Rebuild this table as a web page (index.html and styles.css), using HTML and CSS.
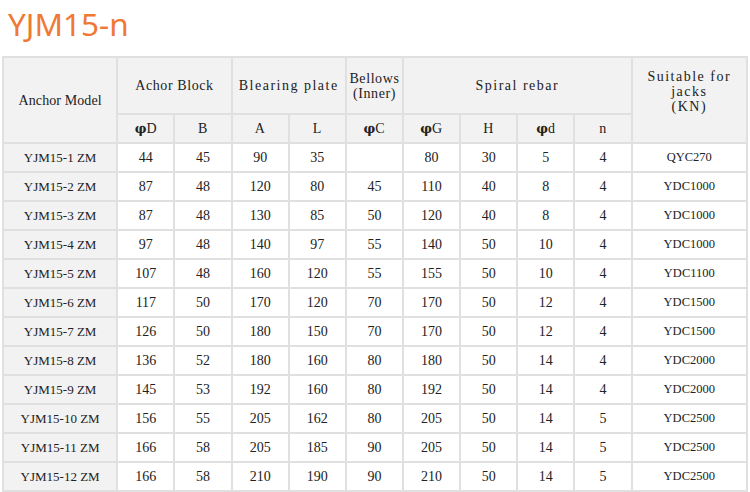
FILE: index.html
```html
<!DOCTYPE html>
<html>
<head>
<meta charset="utf-8">
<link rel="stylesheet" href="styles.css">
</head>
<body>
<h1 class="title">YJM15-n</h1>
<table class="spec">
  <colgroup>
    <col class="c-model"><col class="c"><col class="c"><col class="c"><col class="c"><col class="c"><col class="c"><col class="c"><col class="c"><col class="c"><col class="c-jack">
  </colgroup>
  <thead>
    <tr class="h1row">
      <th rowspan="2" class="tight">Anchor Model</th>
      <th colspan="2">Achor Block</th>
      <th colspan="2" class="wide">Blearing plate</th>
      <th class="two">Bellows<br>(Inner)</th>
      <th colspan="4" class="wide">Spiral rebar</th>
      <th rowspan="2" class="jack wide"><span class="jacktxt">Suitable for<br>jacks<br>(KN)</span></th>
    </tr>
    <tr class="h2row">
      <th><span class="phi">φ</span>D</th>
      <th>B</th>
      <th>A</th>
      <th>L</th>
      <th><span class="phi">φ</span>C</th>
      <th><span class="phi">φ</span>G</th>
      <th>H</th>
      <th><span class="phi">φ</span>d</th>
      <th>n</th>
    </tr>
  </thead>
  <tbody>
    <tr><td class="m">YJM15-1 ZM</td><td>44</td><td>45</td><td>90</td><td>35</td><td></td><td>80</td><td>30</td><td>5</td><td>4</td><td class="j">QYC270</td></tr>
    <tr><td class="m">YJM15-2 ZM</td><td>87</td><td>48</td><td>120</td><td>80</td><td>45</td><td>110</td><td>40</td><td>8</td><td>4</td><td class="j">YDC1000</td></tr>
    <tr><td class="m">YJM15-3 ZM</td><td>87</td><td>48</td><td>130</td><td>85</td><td>50</td><td>120</td><td>40</td><td>8</td><td>4</td><td class="j">YDC1000</td></tr>
    <tr><td class="m">YJM15-4 ZM</td><td>97</td><td>48</td><td>140</td><td>97</td><td>55</td><td>140</td><td>50</td><td>10</td><td>4</td><td class="j">YDC1000</td></tr>
    <tr><td class="m">YJM15-5 ZM</td><td>107</td><td>48</td><td>160</td><td>120</td><td>55</td><td>155</td><td>50</td><td>10</td><td>4</td><td class="j">YDC1100</td></tr>
    <tr><td class="m">YJM15-6 ZM</td><td>117</td><td>50</td><td>170</td><td>120</td><td>70</td><td>170</td><td>50</td><td>12</td><td>4</td><td class="j">YDC1500</td></tr>
    <tr><td class="m">YJM15-7 ZM</td><td>126</td><td>50</td><td>180</td><td>150</td><td>70</td><td>170</td><td>50</td><td>12</td><td>4</td><td class="j">YDC1500</td></tr>
    <tr><td class="m">YJM15-8 ZM</td><td>136</td><td>52</td><td>180</td><td>160</td><td>80</td><td>180</td><td>50</td><td>14</td><td>4</td><td class="j">YDC2000</td></tr>
    <tr><td class="m">YJM15-9 ZM</td><td>145</td><td>53</td><td>192</td><td>160</td><td>80</td><td>192</td><td>50</td><td>14</td><td>4</td><td class="j">YDC2000</td></tr>
    <tr><td class="m">YJM15-10 ZM</td><td>156</td><td>55</td><td>205</td><td>162</td><td>80</td><td>205</td><td>50</td><td>14</td><td>5</td><td class="j">YDC2500</td></tr>
    <tr><td class="m">YJM15-11 ZM</td><td>166</td><td>58</td><td>205</td><td>185</td><td>90</td><td>205</td><td>50</td><td>14</td><td>5</td><td class="j">YDC2500</td></tr>
    <tr><td class="m">YJM15-12 ZM</td><td>166</td><td>58</td><td>210</td><td>190</td><td>90</td><td>210</td><td>50</td><td>14</td><td>5</td><td class="j">YDC2500</td></tr>
  </tbody>
</table>
</body>
</html>
```
FILE: styles.css
```css
html, body {
  margin: 0;
  padding: 0;
  background: #ffffff;
}

.title {
  margin: 0;
  padding: 3px 8px 0;
  height: 52px;
  box-sizing: border-box;
  font-family: "Noto Sans", "Open Sans", sans-serif;
  font-weight: 400;
  font-size: 31.5px;
  line-height: 42px;
  color: #f07835;
}

.spec {
  margin-left: 2px;
  margin-top: 4px;
  width: 746px;
  table-layout: fixed;
  border-collapse: collapse;
  border: 2px solid #e0e0e0;
  font-family: "Liberation Serif", "DejaVu Serif", serif;
  font-size: 14px;
  color: #222222;
}

.c-model { width: 114px; }
.c { width: 57px; }
.c-jack { width: 115px; }

.spec th,
.spec td {
  border: 2px solid #e0e0e0;
  text-align: center;
  vertical-align: middle;
  padding: 0;
  font-weight: normal;
  line-height: 15px;
}

.spec th {
  background: #f2f2f2;
  letter-spacing: 0.6px;
}

.spec th.tight {
  letter-spacing: 0.1px;
}

.spec th.wide {
  letter-spacing: 1.5px;
}

.h1row { height: 57px; }
.h2row { height: 29px; }
.spec tbody tr { height: 29px; }

.spec td {
  font-size: 14px;
  background: #ffffff;
}

.spec td.m {
  font-size: 13px;
  background: #f2f2f2;
}

.spec td.j {
  font-size: 12.5px;
}

.phi {
  font-family: "DejaVu Serif", serif;
  font-weight: bold;
  font-size: 13px;
  letter-spacing: 0;
}

.jacktxt {
  display: block;
  padding-bottom: 18px;
}
```
